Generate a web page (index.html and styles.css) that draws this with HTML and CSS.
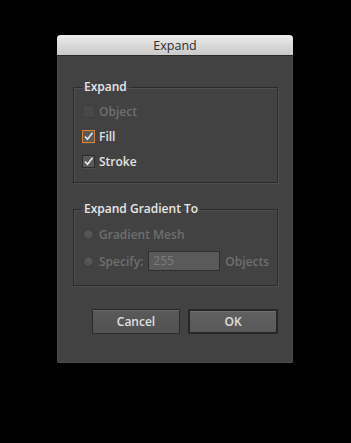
FILE: index.html
```html
<!DOCTYPE html>
<html lang="en">

<head>
    <meta charset="UTF-8">
    <meta name="viewport" content="width=device-width, initial-scale=1.0">
    <title>Expand</title>
    <link rel="stylesheet" href="styles.css">
</head>

<body>

    <div class="dialog">
        <div class="title-bar">Expand</div>

        <div class="dialog-body">
            <fieldset class="group">
                <legend>Expand</legend>
                <label class="row disabled">
                    <span class="check"></span>
                    <span>Object</span>
                </label>
                <label class="row">
                    <span class="check focus">
                        <svg class="tick" viewBox="0 0 11 11" width="11" height="11"><path d="M2 5.5 L4.5 8.3 L9.5 1.8" fill="none" stroke="#d8ecfa" stroke-width="1.6" /></svg>
                    </span>
                    <span>Fill</span>
                </label>
                <label class="row">
                    <span class="check">
                        <svg class="tick" viewBox="0 0 11 11" width="11" height="11"><path d="M2 5.5 L4.5 8.3 L9.5 1.8" fill="none" stroke="#eef2f6" stroke-width="1.5" /></svg>
                    </span>
                    <span>Stroke</span>
                </label>
            </fieldset>

            <fieldset class="group gradient">
                <legend>Expand Gradient To</legend>
                <label class="row disabled">
                    <span class="radio"></span>
                    <span>Gradient Mesh</span>
                </label>
                <label class="row disabled specify">
                    <span class="radio"></span>
                    <span>Specify:</span>
                    <span class="num-input">255</span>
                    <span class="unit">Objects</span>
                </label>
            </fieldset>

            <div class="buttons">
                <button class="button">Cancel</button>
                <button class="button default">OK</button>
            </div>
        </div>
    </div>

</body>

</html>
```

FILE: styles.css
```css
/* General Reset */
* {
    box-sizing: border-box;
}

body {
    margin: 0;
    padding: 35px 0 0 57px;
    background: #000;
    font-family: "Open Sans", "DejaVu Sans", sans-serif;
    height: 100vh;
    overflow: hidden;
}

.dialog {
    width: 236px;
    height: 328px;
    background: #424242;
    border-radius: 4px 4px 2px 2px;
    box-shadow: inset 0 0 0 1px #4c4c4c;
    overflow: hidden;
}

.title-bar {
    height: 21px;
    line-height: 21px;
    text-align: center;
    font-size: 12.5px;
    color: #2e2e2e;
    background: linear-gradient(#ececec, #c9c9c9);
    border-bottom: 1px solid #2c2c2c;
}

.dialog-body {
    padding: 23px 15px 0 16px;
}

/* Groups */
.group {
    margin: 0;
    padding: 4px 0 8px 8px;
    border: 1px solid #2b2b2b;
    box-shadow: 1px 1px 0 #4f4f4f, inset 1px 1px 0 #4f4f4f;
    min-width: 0;
}

.group legend {
    padding: 0 2px;
    margin-left: 0;
    font-size: 12px;
    font-weight: 600;
    line-height: 16px;
    color: #e6e6e6;
}

.gradient {
    margin-top: 18px;
    padding-top: 5px;
    padding-bottom: 10px;
}

.row {
    display: flex;
    align-items: center;
    gap: 4px;
    height: 25px;
    font-size: 12px;
    font-weight: 600;
    color: #e2e2e2;
}

.row.disabled {
    color: #6f6f6f;
}

.row.specify {
    height: 28px;
}

/* Checkboxes */
.check {
    position: relative;
    flex: none;
    width: 13px;
    height: 13px;
    border: 1px solid #2c2c2c;
    background: #5a5a5a;
    box-shadow: 0 1px 0 #4e4e4e;
}

.disabled .check {
    background: #484848;
    border-color: #3e3e3e;
    box-shadow: none;
}

.tick {
    position: absolute;
    left: 0;
    top: 0;
}

.check.focus {
    border-color: #d9832f;
}

/* Radios */
.radio {
    width: 11px;
    height: 11px;
    margin: 0 1px 0 1px;
    border-radius: 50%;
    background: radial-gradient(circle at 50% 40%, #5a5a5a, #4a4a4a);
    border: 1px solid #3c3c3c;
}

.num-input {
    width: 72px;
    height: 20px;
    margin-left: 1px;
    padding-left: 4px;
    line-height: 18px;
    font-weight: 400;
    color: #7e7e7e;
    background: #5a5a5a;
    border: 1px solid #2e2e2e;
}

.unit {
    margin-left: 1px;
}

/* Buttons */
.buttons {
    display: flex;
    justify-content: flex-end;
    gap: 8px;
    margin-top: 23px;
}

.button {
    width: 88px;
    height: 25px;
    padding: 0;
    font-family: inherit;
    font-size: 12px;
    font-weight: 600;
    color: #e0e0e0;
    background: linear-gradient(#5a5a5a, #525252);
    border: 1px solid #2a2a2a;
    border-radius: 1px;
    box-shadow: inset 0 1px 0 #666;
}

.button.default {
    width: 90px;
    background: linear-gradient(#616161, #585858);
    border: 2px solid #262626;
    box-shadow: inset 0 1px 0 #6e6e6e;
}
```
